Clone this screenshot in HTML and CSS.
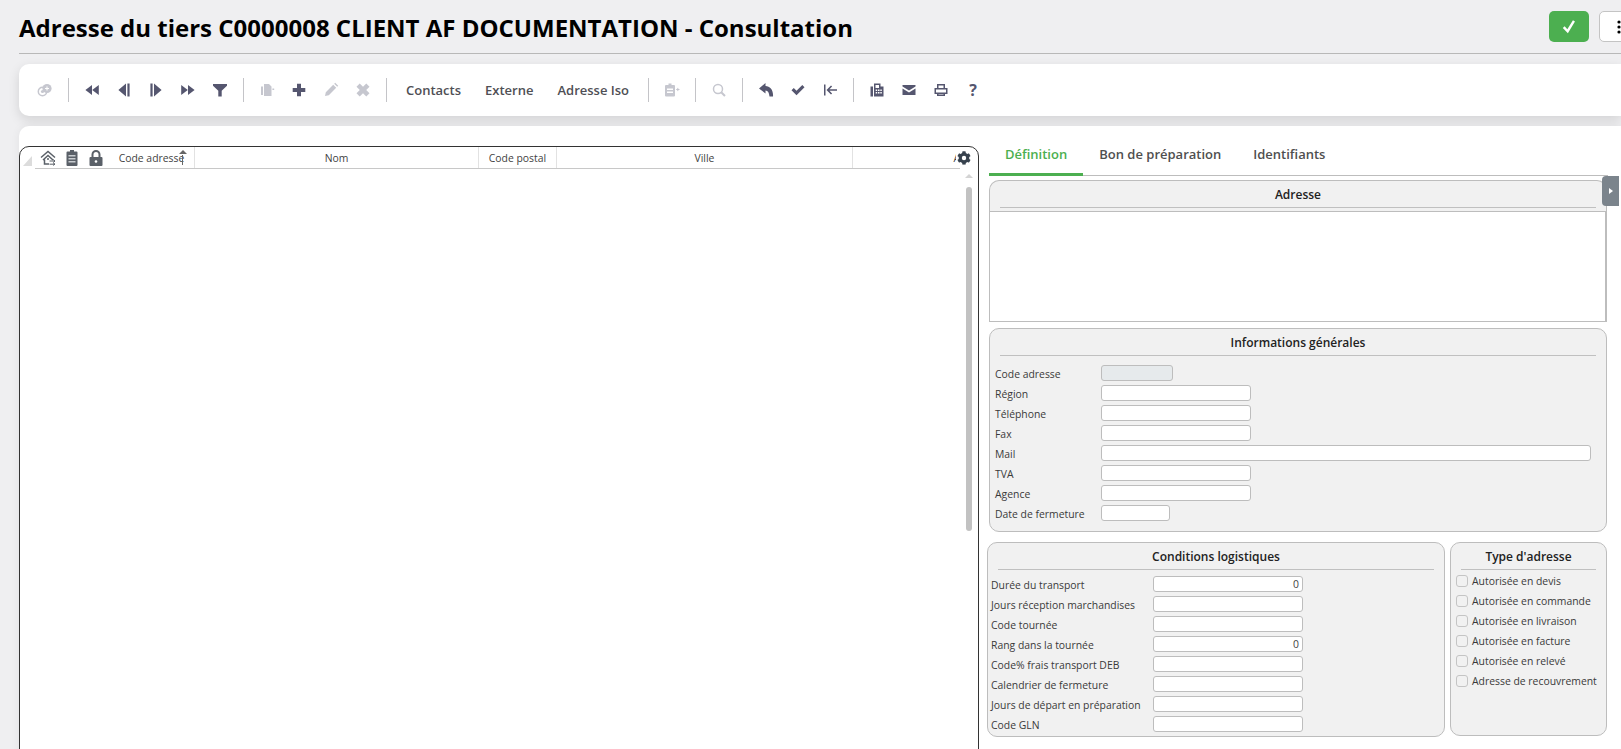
FILE: index.html
```html
<!DOCTYPE html>
<html lang="fr">
<head>
    <meta charset="UTF-8">
    <title>Adresse du tiers</title>
    <link rel="stylesheet" href="styles.css">
</head>
<body>
    <header class="page-head">
        <h1>Adresse du tiers C0000008 CLIENT AF DOCUMENTATION - Consultation</h1>
        <div class="head-actions">
            <button class="btn-ok" type="button">
                <svg viewBox="0 0 16 16" width="18" height="18"><path d="M2.5 8.8l1.6-1.5 2.4 2.8L11.500 2l1.800 1.100-6.300 10.400z" fill="#fff"/></svg>
            </button>
            <button class="btn-more" type="button">
                <svg viewBox="0 0 4 16" width="4" height="16"><circle cx="2" cy="3" r="1.6"/><circle cx="2" cy="8" r="1.6"/><circle cx="2" cy="13" r="1.6"/></svg>
            </button>
        </div>
    </header>

    <nav class="toolbar">
        <span class="tool off"><svg viewBox="0 0 16 16"><circle cx="5.5" cy="9.5" r="4.2" fill="none" stroke="currentColor" stroke-width="1.5"/><circle cx="10" cy="6.5" r="4.6" fill="currentColor"/><circle cx="5.5" cy="9.5" r="1.6" fill="currentColor"/><path d="M8 6.5h4M10 4.5v4" stroke="#fff" stroke-width="1.1"/></svg></span>
        <span class="sep"></span>
        <span class="tool"><svg viewBox="0 0 16 16"><path d="M8 3v10L1.400 8zM14.800 3v10L8.200 8z"/></svg></span>
        <span class="tool"><svg viewBox="0 0 16 16"><path d="M10 1.600v12.800L2.400 8zM11.400 1.600h2.200v12.800h-2.200z"/></svg></span>
        <span class="tool"><svg viewBox="0 0 16 16"><path d="M6 1.600v12.800L13.600 8zM2.400 1.600h2.200v12.800H2.400z"/></svg></span>
        <span class="tool"><svg viewBox="0 0 16 16"><path d="M1.200 3v10L7.800 8zM8 3v10L14.600 8z"/></svg></span>
        <span class="tool"><svg viewBox="0 0 16 16"><path d="M1 2h14v1.800L9.700 8.800v5.600H6.300V8.800L1 3.800z"/></svg></span>
        <span class="sep"></span>
        <span class="tool off"><svg viewBox="0 0 16 16"><path d="M5 2h5l2.500 2.500V14H5zM2 4.500h2V13H2zM13.400 6.500h1.800v1.600h-1.800z"/></svg></span>
        <span class="tool"><svg viewBox="0 0 16 16"><path d="M6 1.800h4V6h4.300v4H10v4.200H6V10H1.700V6H6z"/></svg></span>
        <span class="tool off"><svg viewBox="0 0 16 16"><path d="M2 14l.8-3.800 7.400-7.400 3 3-7.400 7.400zM11.200 1.800l1-1 3 3-1 1z"/></svg></span>
        <span class="tool off"><svg viewBox="0 0 16 16"><path d="M4.700 1.500L8 4.800l3.300-3.300 3.200 3.200L11.200 8l3.300 3.300-3.200 3.200L8 11.200l-3.300 3.300-3.200-3.200L4.800 8 1.500 4.700z"/></svg></span>
        <span class="sep"></span>
        <a class="tool-text first">Contacts</a>
        <a class="tool-text">Externe</a>
        <a class="tool-text">Adresse Iso</a>
        <span class="sep"></span>
        <span class="tool off"><svg viewBox="0 0 16 16"><path d="M4.500 1.500h3V3H10q1 0 1 1v9.500q0 1-1 1H2q-1 0-1-1V4q0-1 1-1h2.500z"/><path d="M3 6.500h6V8H3zM3 9.500h6V11H3z" fill="#fff"/><path d="M12.200 7.500h3.300M13.800 5.900v3.200" fill="none" stroke="currentColor"/></svg></span>
        <span class="sep"></span>
        <span class="tool off"><svg viewBox="0 0 16 16"><circle cx="7" cy="7" r="4.500" fill="none" stroke="currentColor" stroke-width="1.500"/><path d="M10.200 10.200l3.800 3.800" stroke="currentColor" stroke-width="2"/></svg></span>
        <span class="sep"></span>
        <span class="tool"><svg viewBox="0 0 16 16"><path d="M7.500 1L1 6.500l6.500 5v-3c2.500 0 3.500 2 4 6H15C15.500 8 12 4 7.500 4z"/></svg></span>
        <span class="tool"><svg viewBox="0 0 16 16"><path d="M1.500 8.300L3.800 6l2.700 2.700L12.300 3l2.200 2.200-8 8z"/></svg></span>
        <span class="tool"><svg viewBox="0 0 16 16"><path d="M2 2.500h1.500v11H2zM9 3.500l1.100 1.100-2.600 2.600H15v1.600H7.500l2.600 2.600L9 12.500 4.500 8z"/></svg></span>
        <span class="sep"></span>
        <span class="tool"><svg viewBox="0 0 16 16"><path d="M1.500 4.500h2.500v10H1.500zM5 1.500h6.500v3h3v10H5zM6.500 3v3H10V3z"/><path d="M6.700 7.500h1.500V9H6.700zM9 7.500h1.500V9H9zM11.300 7.500h1.500V9h-1.500zM6.700 10h1.500v1.500H6.700zM9 10h1.500v1.500H9zM11.300 10h1.500v1.500h-1.500z" fill="#fff"/></svg></span>
        <span class="tool"><svg viewBox="0 0 16 16"><path d="M1.500 3h13v1.600L8 8.600 1.500 4.600zM1.500 6.400L8 10.400l6.500-4V13h-13z"/></svg></span>
        <span class="tool"><svg viewBox="0 0 16 16"><path d="M4 2h8v4h2.500v6H12v2H4v-2H1.500V6H4zm1.500 1.500V6h5V3.500zM3 7.500v3h10v-3zM5.500 12v.500h5V12z" fill-rule="evenodd"/></svg></span>
        <span class="tool tool-help">?</span>
    </nav>

    <main class="content">
        <section class="grid">
            <div class="grid-head">
                <span class="corner"></span>
                <div class="cols">
                    <div class="col col-icons">
                        <svg viewBox="0 0 16 16"><path d="M1 7.500L8 1.500l7 6M3 10l5-4.500 5 4.500M4.500 9.500V14H9M7 9h2" fill="none" stroke="currentColor" stroke-width="1.500"/><path d="M9.500 11H15M13.200 9.500l1.800 1.500-1.800 1.500M9.500 14.200H15M13.200 13l1.800 1.200-1.800 1.200" fill="none" stroke="currentColor"/></svg>
                        <svg viewBox="0 0 16 16"><path d="M6 0h4v1.500h2.500q1 0 1 1V15q0 1-1 1h-9q-1 0-1-1V2.500q0-1 1-1H6z"/><path d="M4.500 5h7v1.500h-7zM4.500 8h7v1.500h-7zM4.500 11h7v1.500h-7z" fill="#c8ccd0"/></svg>
                        <svg viewBox="0 0 16 16"><path d="M3.500 7V4.500a4.500 4.500 0 0 1 9 0V7h-2V4.500a2.500 2.500 0 0 0-5 0V7z"/><path d="M2.500 7h11q1 0 1 1v7q0 1-1 1h-11q-1 0-1-1V8q0-1 1-1z"/><circle cx="8" cy="11.500" r="1.300" fill="#fff"/></svg>
                    </div>
                    <div class="col col-code">Code adresse
                        <span class="sort"></span>
                    </div>
                    <div class="col col-nom">Nom</div>
                    <div class="col col-cp">Code postal</div>
                    <div class="col col-ville">Ville</div>
                    <div class="col col-last">A</div>
                </div>
                <svg class="gear" viewBox="0 0 512 512"><path d="M487 316l-42-25a190 190 0 0 0 0-70l42-25c5-3 7-8 5-14-11-35-30-67-54-93-4-4-10-5-15-2l-42 25a190 190 0 0 0-61-35V28c0-6-4-11-9-12-37-8-74-8-110 0-6 1-10 6-10 12v49a190 190 0 0 0-61 35L88 87c-5-3-11-2-15 2-24 26-43 58-54 93-2 6 0 11 5 14l42 25a190 190 0 0 0 0 70l-42 25c-5 3-7 8-5 14 11 35 30 67 54 93 4 4 10 5 15 2l42-25a190 190 0 0 0 61 35v49c0 6 4 11 10 12 36 8 73 8 110 0 5-1 9-6 9-12v-49a190 190 0 0 0 61-35l42 25c5 3 11 2 15-2 24-26 43-58 54-93 2-6 0-11-5-14zM256 336a80 80 0 1 1 0-160 80 80 0 0 1 0 160z"/></svg>
            </div>
            <div class="scroller">
                <span class="scroll-up"></span>
                <span class="scroll-thumb"></span>
            </div>
        </section>

        <section class="detail">
            <div class="tabs">
                <a class="tab active">Définition</a>
                <a class="tab">Bon de préparation</a>
                <a class="tab">Identifiants</a>
            </div>

            <div class="box box-adresse">
                <h3>Adresse</h3>
                <div class="text-area"></div>
            </div>

            <div class="box box-info">
                <h3>Informations générales</h3>
                <div class="rows">
                    <div class="row"><label>Code adresse</label><span class="field field-code"></span></div>
                    <div class="row"><label>Région</label><span class="field"></span></div>
                    <div class="row"><label>Téléphone</label><span class="field"></span></div>
                    <div class="row"><label>Fax</label><span class="field"></span></div>
                    <div class="row"><label>Mail</label><span class="field field-mail"></span></div>
                    <div class="row"><label>TVA</label><span class="field"></span></div>
                    <div class="row"><label>Agence</label><span class="field"></span></div>
                    <div class="row"><label>Date de fermeture</label><span class="field field-date"></span></div>
                </div>
            </div>

            <div class="box-line">
                <div class="box box-cond">
                    <h3>Conditions logistiques</h3>
                    <div class="rows">
                        <div class="row"><label>Durée du transport</label><span class="field">0</span></div>
                        <div class="row"><label>Jours réception marchandises</label><span class="field"></span></div>
                        <div class="row"><label>Code tournée</label><span class="field"></span></div>
                        <div class="row"><label>Rang dans la tournée</label><span class="field">0</span></div>
                        <div class="row"><label>Code% frais transport DEB</label><span class="field"></span></div>
                        <div class="row"><label>Calendrier de fermeture</label><span class="field"></span></div>
                        <div class="row"><label>Jours de départ en préparation</label><span class="field"></span></div>
                        <div class="row"><label>Code GLN</label><span class="field"></span></div>
                    </div>
                </div>
                <div class="box box-type">
                    <h3>Type d'adresse</h3>
                    <div class="checks">
                        <div class="check"><span class="tick"></span>Autorisée en devis</div>
                        <div class="check"><span class="tick"></span>Autorisée en commande</div>
                        <div class="check"><span class="tick"></span>Autorisée en livraison</div>
                        <div class="check"><span class="tick"></span>Autorisée en facture</div>
                        <div class="check"><span class="tick"></span>Autorisée en relevé</div>
                        <div class="check"><span class="tick"></span>Adresse de recouvrement</div>
                    </div>
                </div>
            </div>
        </section>

        <a class="side-handle"></a>
    </main>
</body>
</html>
```

FILE: styles.css
```css
* {
    box-sizing: border-box;
}

html, body {
    height: 749px;
    overflow: hidden;
}

body {
    margin: 0;
    padding-left: 19px;
    background-color: #efeff1;
    color: #3a3a3a;
    font-family: "Open Sans", "Noto Sans", sans-serif;
    font-size: 10.4px;
}

.page-head {
    display: flex;
    justify-content: space-between;
    align-items: flex-start;
    height: 54px;
    border-bottom: 1px solid #b8b8b8;
    padding-top: 11px;
}

h1 {
    margin: 0;
    color: #000;
    font-size: 24px;
    font-weight: 700;
    line-height: 34px;
    white-space: nowrap;
}

.head-actions {
    display: flex;
    gap: 10px;
    margin-right: -18px;
}

.head-actions button {
    display: flex;
    justify-content: center;
    align-items: center;
    width: 40px;
    height: 31px;
    padding: 0;
    border-radius: 5px;
}

.btn-ok {
    background-color: #4caf50;
    border: none;
}

.btn-more {
    background-color: #fff;
    border: 1px solid #c4c4c4;
    justify-content: flex-start !important;
    padding-left: 17px !important;
}

.toolbar {
    display: flex;
    align-items: center;
    height: 52px;
    margin-top: 10px;
    padding-left: 10px;
    background-color: #fff;
    border-radius: 10px 0 0 10px;
    box-shadow: 0 4px 12px rgba(0, 0, 0, 0.12);
}

.tool {
    display: flex;
    justify-content: center;
    align-items: center;
    width: 32px;
    height: 32px;
    color: #55566f;
}

.tool svg {
    width: 16px;
    height: 16px;
    fill: currentColor;
}

.tool.off {
    color: #c6c7cf;
}

.tool-help {
    font-size: 16px;
    font-weight: 700;
}

.sep {
    width: 1px;
    height: 24px;
    margin: 0 7px;
    background-color: #c4c4c8;
}

.tool-text {
    padding: 0 12px;
    color: #4f4f55;
    font-size: 13px;
    font-weight: 600;
    white-space: nowrap;
}

.content {
    position: relative;
    display: flex;
    align-items: flex-start;
    height: 640px;
    margin-top: 10px;
    background-color: #fff;
    border-radius: 10px 0 0 0;
    box-shadow: 0 0 10px rgba(0, 0, 0, 0.06);
}

.grid {
    position: relative;
    flex: none;
    width: 960px;
    height: 640px;
    margin-top: 20px;
    border: 1px solid #333;
    border-radius: 10px;
}

.grid-head {
    position: relative;
    height: 22px;
}

.corner {
    position: absolute;
    left: 3px;
    top: 9px;
    width: 0;
    height: 0;
    border-left: 9px solid transparent;
    border-bottom: 10px solid #dcdcdc;
}

.cols {
    display: flex;
    position: absolute;
    left: 15px;
    top: 0;
    width: 925px;
    height: 22px;
    border-bottom: 1px solid #c8c8c8;
}

.col {
    position: relative;
    flex: none;
    height: 21px;
    border-right: 1px solid #e2e2e2;
    color: #3f3f3f;
    font-size: 10.4px;
    line-height: 23px;
    text-align: center;
}

.col-icons {
    display: flex;
    align-items: center;
    gap: 8px;
    width: 74px;
    padding-left: 5px;
    border-right: none;
    color: #5a6068;
}

.col-icons svg {
    width: 16px;
    height: 16px;
    fill: currentColor;
}

.col-code {
    width: 86px;
    white-space: nowrap;
}

.sort {
    position: absolute;
    left: 70px;
    top: 3px;
    width: 0;
    height: 0;
    border-left: 4px solid transparent;
    border-right: 4px solid transparent;
    border-bottom: 4px solid #666;
}

.sort::after {
    content: "";
    position: absolute;
    left: -1px;
    top: 5px;
    width: 1px;
    height: 10px;
    background-color: #666;
}

.col-nom {
    width: 284px;
}

.col-cp {
    width: 78px;
}

.col-ville {
    width: 296px;
}

.col-last {
    width: 107px;
    border-right: none;
    text-align: right;
}

.gear {
    position: absolute;
    left: 936px;
    top: 3px;
    width: 16px;
    height: 16px;
    padding: 1px;
    background-color: #fff;
    fill: #37424e;
}

.scroller {
    position: absolute;
    left: 946px;
    top: 27px;
    width: 6px;
}

.scroll-up {
    display: block;
    width: 0;
    height: 0;
    margin-left: -1px;
    border-left: 4px solid transparent;
    border-right: 4px solid transparent;
    border-bottom: 4px solid #d4d4d4;
}

.scroll-thumb {
    display: block;
    width: 6px;
    height: 344px;
    margin-top: 9px;
    background-color: #c2c2c2;
    border-radius: 3px;
}

.detail {
    flex: none;
    width: 619px;
    margin-left: 10px;
    padding-top: 10px;
}

.tabs {
    display: flex;
    height: 40px;
    border-bottom: 1px solid #bdbdbd;
}

.tab {
    height: 40px;
    padding: 0 16px;
    border-bottom: 3px solid transparent;
    color: #4f4f4f;
    font-size: 13px;
    font-weight: 600;
    line-height: 36px;
}

.tab.active {
    border-bottom-color: #4caf50;
    color: #4caf50;
}

.box {
    background-color: #f1f1f1;
    border: 1px solid #bdbdbd;
    border-radius: 10px;
}

.box h3 {
    height: 27px;
    margin: 0 10px;
    border-bottom: 1px solid #c0c0c0;
    color: #222;
    font-size: 12px;
    font-weight: 600;
    line-height: 28px;
    text-align: center;
}

.box-adresse {
    width: 618px;
    height: 142px;
    margin-top: 4px;
    border-bottom: none;
    border-radius: 10px 10px 0 0;
}

.text-area {
    width: 616px;
    height: 111px;
    margin-top: 3px;
    background-color: #fff;
    border-top: 1px solid #bdbdbd;
    border-bottom: 1px solid #bdbdbd;
    border-right: 1px solid #bdbdbd;
}

.box-info {
    width: 618px;
    height: 204px;
    margin-top: 6px;
}

.rows {
    padding: 7px 0 0 5px;
}

.row {
    display: flex;
    align-items: center;
    height: 20px;
}

.row label {
    flex: none;
    width: 106px;
    padding-top: 2px;
    white-space: nowrap;
}

.field {
    width: 150px;
    height: 16px;
    padding-right: 3px;
    background-color: #fff;
    border: 1px solid #bdbdbd;
    border-radius: 3px;
    color: #444;
    font-size: 10.4px;
    line-height: 15px;
    text-align: right;
}

.field-code {
    width: 72px;
    background-color: #e6eaec;
}

.field-mail {
    width: 490px;
}

.field-date {
    width: 69px;
}

.box-line {
    display: flex;
    align-items: flex-start;
    gap: 5px;
    margin: 10px 0 0 -2px;
}

.box-cond {
    width: 458px;
    height: 195px;
}

.box-cond .rows {
    padding: 4px 0 0 3px;
}

.box-cond .row label {
    width: 162px;
}

.box-type {
    width: 157px;
    height: 194px;
}

.checks {
    padding: 1px 0 0 5px;
}

.check {
    display: flex;
    align-items: center;
    gap: 4px;
    height: 20px;
    white-space: nowrap;
}

.tick {
    flex: none;
    width: 12px;
    height: 12px;
    background-color: #f1f1f1;
    border: 1px solid #c4c4c4;
    border-radius: 3px;
}

.side-handle {
    position: absolute;
    top: 50px;
    left: 1583px;
    width: 17px;
    height: 30px;
    background-color: #7b848c;
    border-radius: 4px 0 0 4px;
}

.side-handle::after {
    content: "";
    position: absolute;
    left: 7px;
    top: 12px;
    border-top: 3px solid transparent;
    border-bottom: 3px solid transparent;
    border-left: 4px solid #fff;
}
```
